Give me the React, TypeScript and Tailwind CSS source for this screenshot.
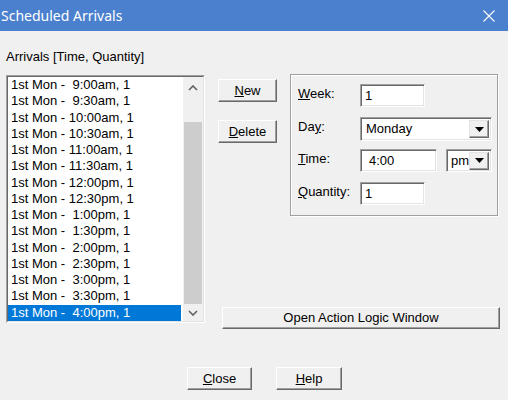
import { ReactNode } from "react";

const arrivals = [
    "1st Mon -  9:00am, 1",
    "1st Mon -  9:30am, 1",
    "1st Mon - 10:00am, 1",
    "1st Mon - 10:30am, 1",
    "1st Mon - 11:00am, 1",
    "1st Mon - 11:30am, 1",
    "1st Mon - 12:00pm, 1",
    "1st Mon - 12:30pm, 1",
    "1st Mon -  1:00pm, 1",
    "1st Mon -  1:30pm, 1",
    "1st Mon -  2:00pm, 1",
    "1st Mon -  2:30pm, 1",
    "1st Mon -  3:00pm, 1",
    "1st Mon -  3:30pm, 1",
    "1st Mon -  4:00pm, 1",
];

// classic raised push button
function Btn({ children, className }: { children: ReactNode; className: string }) {
    return (
        <div
            className={`flex items-center justify-center border border-t-white border-l-white border-b-[#696969] border-r-[#696969] bg-[#f0f0f0] shadow-[inset_-1px_-1px_0_#a0a0a0] text-black ${className}`}
        >
            {children}
        </div>
    );
}

const sunken =
    "border border-t-[#a0a0a0] border-l-[#a0a0a0] border-b-white border-r-white shadow-[inset_1px_1px_0_#696969,inset_-1px_-1px_0_#e3e3e3] bg-white";

function DropArrow() {
    return (
        <div className="flex h-[18px] w-[20px] items-center justify-center border border-t-[#e3e3e3] border-l-[#e3e3e3] border-b-[#696969] border-r-[#696969] bg-[#f0f0f0] shadow-[inset_-1px_-1px_0_#a0a0a0]">
            <svg width="9" height="5" viewBox="0 0 9 5">
                <path d="M0 0h9L4.5 5z" fill="#000" />
            </svg>
        </div>
    );
}

function Chevron({ up }: { up?: boolean }) {
    return (
        <svg width="10" height="6" viewBox="0 0 10 6">
            <path
                d={up ? "M1 5L5 1l4 4" : "M1 1l4 4 4-4"}
                fill="none"
                stroke="#606060"
                strokeWidth="1.6"
            />
        </svg>
    );
}

export default function App() {
    return (
        <div className="flex h-[400px] w-[508px] flex-col bg-[#f0f0f0] font-['Liberation_Sans',Arial,sans-serif] text-[13px] text-black">
            {/* title bar */}
            <div className="flex h-[31px] shrink-0 items-center justify-between bg-[#4a80cd] pl-[1px] pr-[13px]">
                <span className="font-['Noto_Sans',sans-serif] text-[14px] text-white">Scheduled Arrivals</span>
                <svg width="12" height="12" viewBox="0 0 12 12">
                    <path d="M0.5 0.5l11 11M11.5 0.5l-11 11" stroke="#fff" strokeWidth="1.1" />
                </svg>
            </div>

            <div className="mt-[18px] pl-[6px] leading-[15px]">Arrivals [Time, Quantity]</div>

            <div className="mt-[10px] flex pl-[6px]">
                {/* arrivals list */}
                <div className={`mt-[1px] flex h-[248px] w-[199px] border border-t-[#a0a0a0] border-l-[#a0a0a0] border-b-white border-r-white`}>
                    <div className="flex flex-1 border border-t-[#696969] border-l-[#696969] border-b-[#e3e3e3] border-r-[#e3e3e3] bg-white">
                        <div className="w-[175px] pr-[2px]">
                            {arrivals.map((a, i) => (
                                <div
                                    key={a}
                                    className={`h-[16.27px] whitespace-pre pl-[3px] leading-[16.27px] ${
                                        i === arrivals.length - 1 ? "bg-[#0078d7] text-white" : ""
                                    }`}
                                >
                                    {a}
                                </div>
                            ))}
                        </div>
                        <div className="flex w-[20px] flex-col bg-[#f0f0f0]">
                            <div className="flex h-[21px] items-center justify-center">
                                <Chevron up />
                            </div>
                            <div className="h-[24px]" />
                            <div className="mx-[1px] h-[182px] bg-[#cdcdcd]" />
                            <div className="flex h-[17px] items-center justify-center">
                                <Chevron />
                            </div>
                        </div>
                    </div>
                </div>

                <div className="ml-[13px] flex flex-col">
                    <div className="flex">
                        <div className="mt-[5px] flex flex-col gap-[18px]">
                            <Btn className="h-[23px] w-[59px]">
                                <span><u>N</u>ew</span>
                            </Btn>
                            <Btn className="h-[23px] w-[59px]">
                                <span><u>D</u>elete</span>
                            </Btn>
                        </div>

                        {/* item editor */}
                        <div className="ml-[13px] h-[142px] w-[208px] border border-[#a0a0a0] shadow-[inset_1px_1px_0_#fff,1px_1px_0_#fff] pl-[7px] pt-[9px]">
                            <div className="flex h-[23px] items-start">
                                <span className="w-[62px] pt-[2px] leading-[15px]"><u>W</u>eek:</span>
                                <div className={`h-[23px] w-[65px] pl-[4px] leading-[21px] ${sunken}`}>1</div>
                            </div>
                            <div className="mt-[10px] flex h-[24px] items-start">
                                <span className="w-[62px] pt-[2px] leading-[15px]">Da<u>y</u>:</span>
                                <div className={`flex h-[24px] w-[132px] items-center justify-between pl-[5px] pr-[2px] ${sunken}`}>
                                    <span>Monday</span>
                                    <DropArrow />
                                </div>
                            </div>
                            <div className="mt-[8px] flex h-[23px] items-start">
                                <span className="w-[62px] pt-[2px] leading-[15px]"><u>T</u>ime:</span>
                                <div className={`h-[23px] w-[77px] pl-[8px] leading-[21px] ${sunken}`}>4:00</div>
                                <div className={`ml-[9px] flex h-[23px] w-[46px] items-center justify-between pl-[4px] pr-[2px] ${sunken}`}>
                                    <span>pm</span>
                                    <DropArrow />
                                </div>
                            </div>
                            <div className="mt-[10px] flex h-[23px] items-start">
                                <span className="w-[62px] pt-[2px] leading-[15px]"><u>Q</u>uantity:</span>
                                <div className={`h-[23px] w-[65px] pl-[4px] leading-[21px] ${sunken}`}>1</div>
                            </div>
                        </div>
                    </div>

                    <Btn className="ml-[4px] mt-[91px] h-[22px] w-[278px]">Open Action Logic Window</Btn>
                </div>
            </div>

            <div className="mt-[38px] flex gap-[24px] pl-[187px]">
                <Btn className="h-[23px] w-[65px]">
                    <span><u>C</u>lose</span>
                </Btn>
                <Btn className="h-[23px] w-[66px]">
                    <span><u>H</u>elp</span>
                </Btn>
            </div>
        </div>
    );
}
